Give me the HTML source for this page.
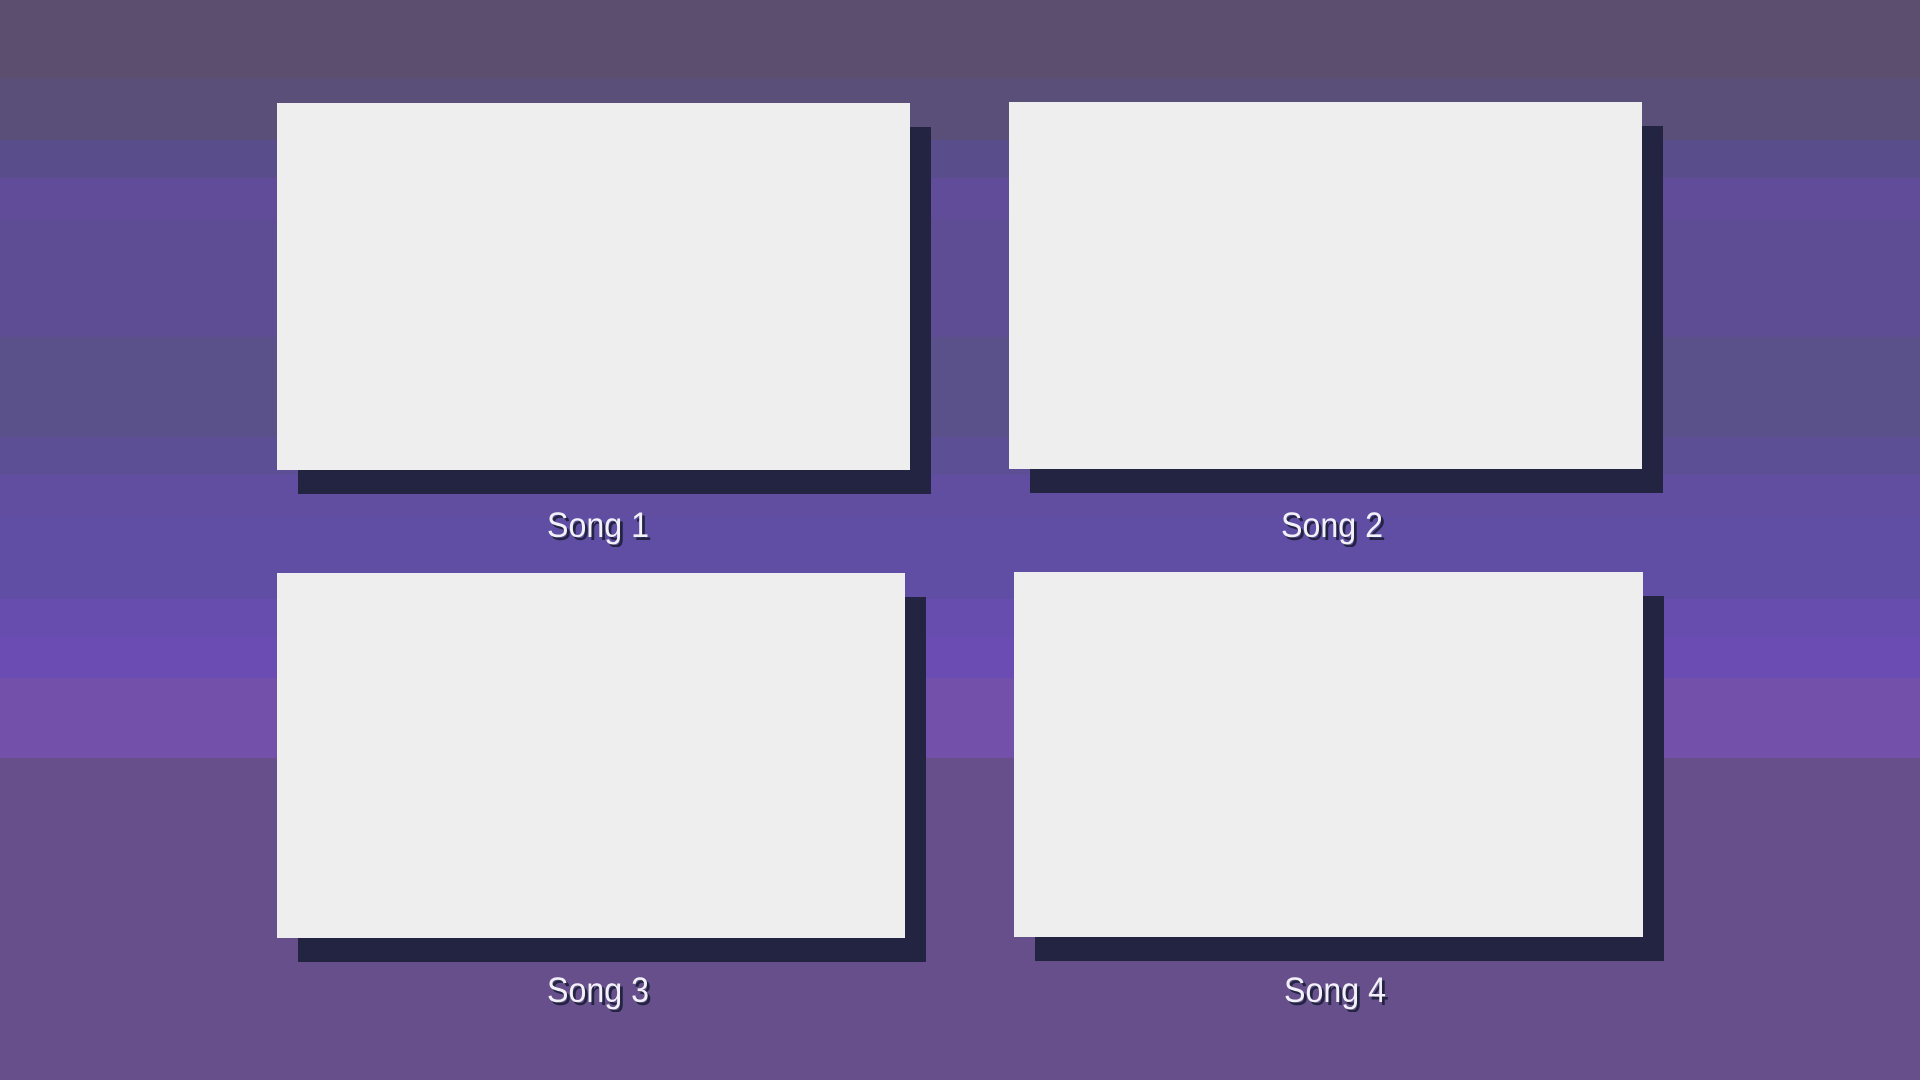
<!DOCTYPE html>
<html><head><style>
body{margin:0;width:1920px;height:1080px;overflow:hidden;position:relative;font-family:"Liberation Sans",sans-serif;
background:linear-gradient(to bottom,#5c4e6e 0 78px,#5a4f78 78px 140px,#5a4d8c 140px 178px,#614c9a 178px 219px,#5e4d94 219px 337px,#5a518a 337px 437px,#5d4f96 437px 475px,#614ea0 475px 517px,#5f4ea3 517px 599px,#674dae 599px 637px,#6b4cb2 637px 678px,#7350aa 678px 758px,#664f8a 758px);}
.c{position:absolute;background:#eeeeef;box-shadow:21px 24px 0 #232342;}
.t{position:absolute;color:#f2f0f8;font-size:35px;text-shadow:3px 3px 0 #232342;width:400px;text-align:center;transform:scaleX(0.92)}
</style></head><body>
<div class="c" style="left:277px;top:103px;width:633px;height:367px"></div>
<div class="c" style="left:1009px;top:102px;width:633px;height:367px"></div>
<div class="c" style="left:277px;top:573px;width:628px;height:365px"></div>
<div class="c" style="left:1014px;top:572px;width:629px;height:365px"></div>
<div class="t" style="left:398px;top:506px">Song 1</div>
<div class="t" style="left:1132px;top:506px">Song 2</div>
<div class="t" style="left:398px;top:971px">Song 3</div>
<div class="t" style="left:1135px;top:971px">Song 4</div>
</body></html>
